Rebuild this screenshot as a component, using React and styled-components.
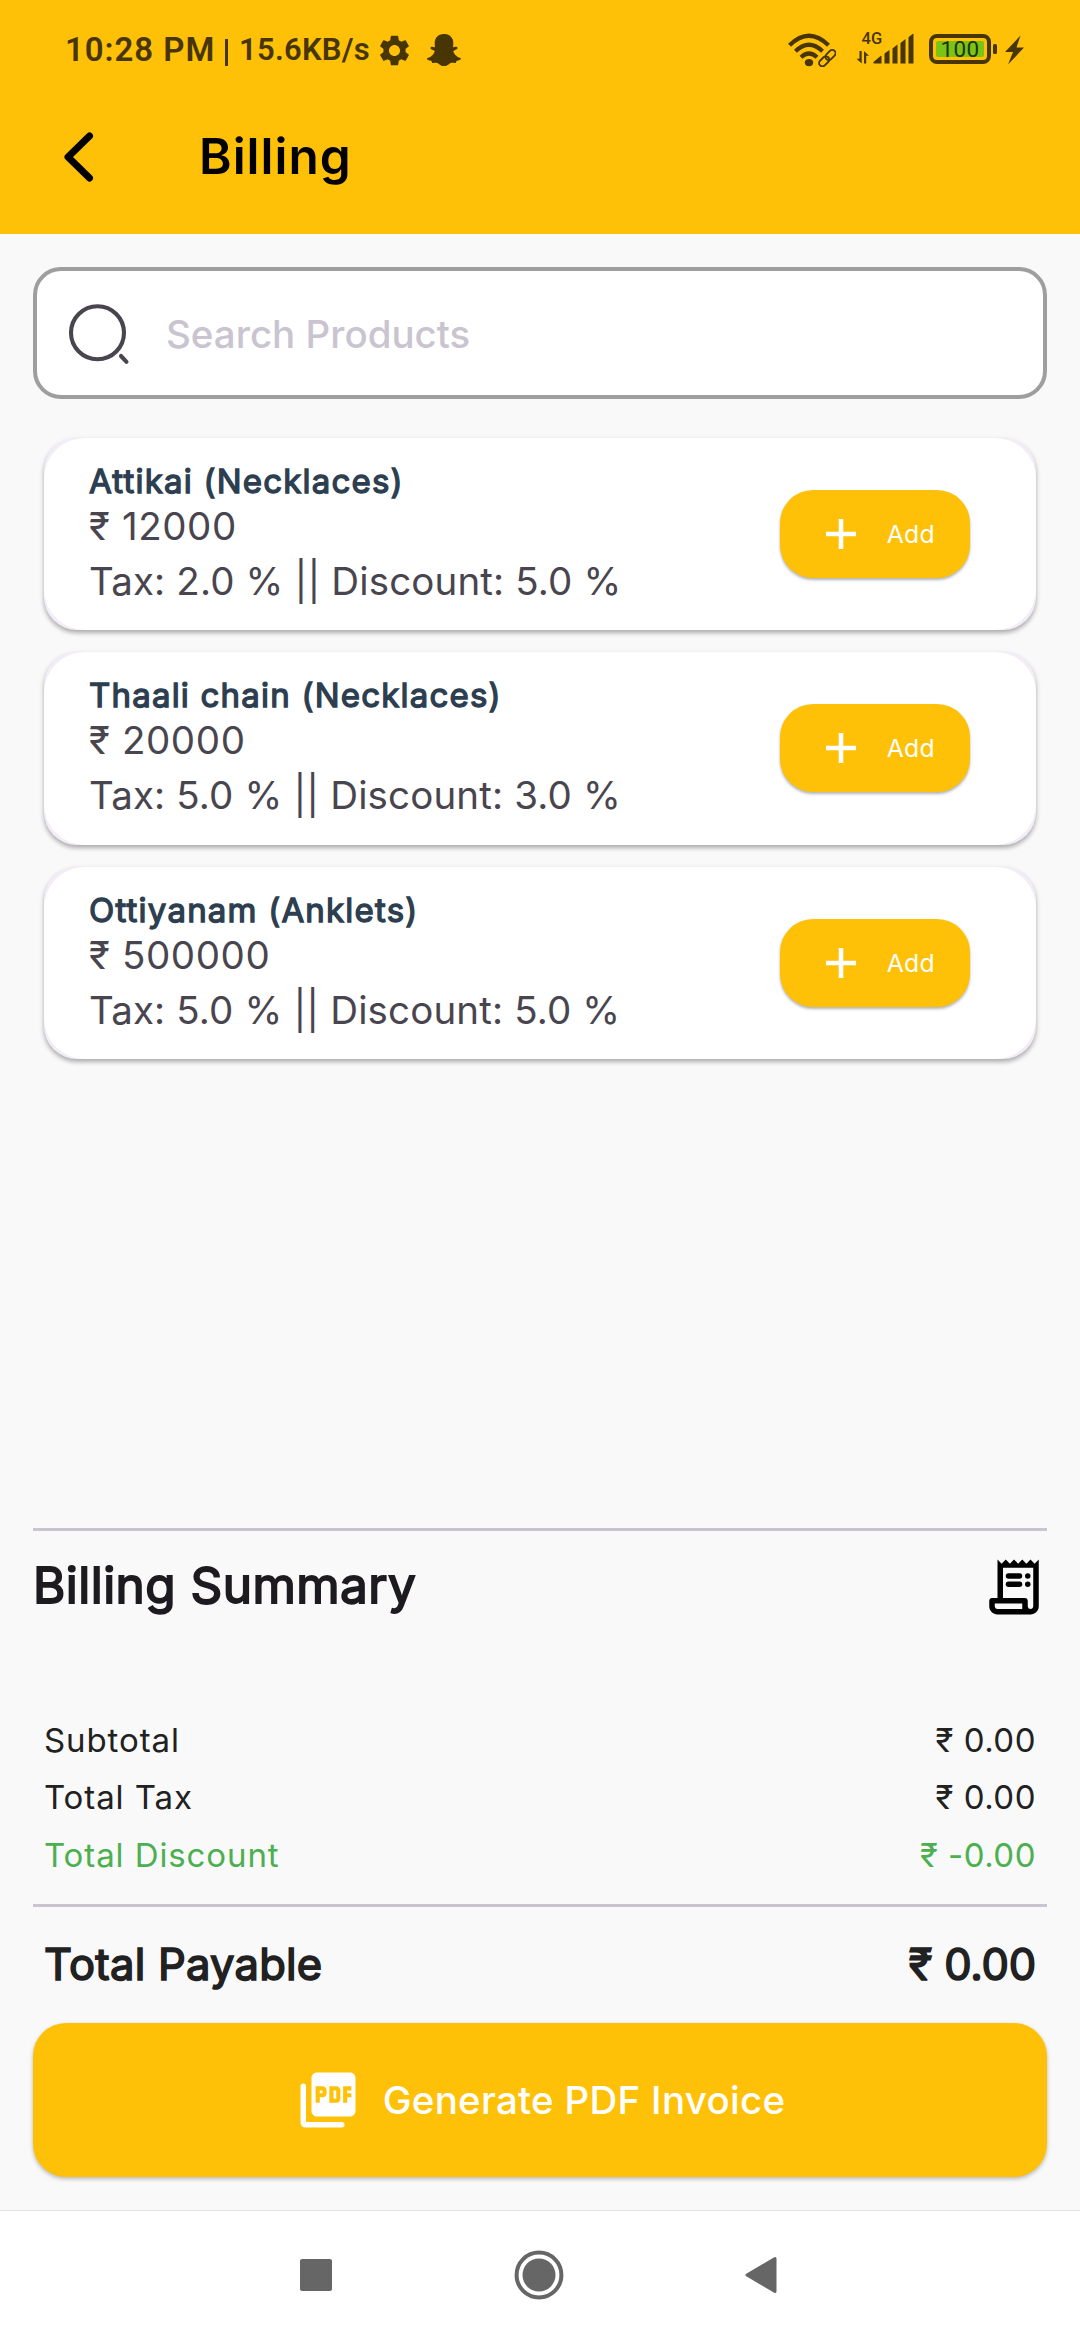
import React from "react";
import styled, { createGlobalStyle } from "styled-components";
import { MdPictureAsPdf, MdSettings } from "react-icons/md";
import { FaSnapchatGhost } from "react-icons/fa";

const AMBER = "#ffc107";
const STATUS_INK = "#473503";

const GlobalStyle = createGlobalStyle`
  * { box-sizing: border-box; }
  html, body { margin: 0; padding: 0; }
  body { background: #f9f9f9; font-family: Inter, "Liberation Sans", sans-serif; }
`;

const Screen = styled.div`
  width: 1080px;
  height: 2340px;
  display: flex;
  flex-direction: column;
  background: #f9f9f9;
  overflow: hidden;
`;

const Header = styled.header`
  height: 234px;
  background: ${AMBER};
  display: flex;
  flex-direction: column;
`;

const StatusBar = styled.div`
  height: 80px;
  padding: 21px 56px 0 65px;
  display: flex;
  justify-content: space-between;
  color: ${STATUS_INK};
  font-family: Roboto, sans-serif;
`;

const StatusGroup = styled.div`
  display: flex;
  height: 58px;
  align-items: center;
`;

const Clock = styled.span`
  width: 150px;
  font-size: 33px;
  font-weight: 600;
  line-height: 58px;
  letter-spacing: 0.95px;
  white-space: pre;
`;

const NetSpeed = styled(Clock)`
  width: 131px;
  font-size: 31px;
  letter-spacing: 0.25px;
`;

const StatusDivider = styled.i`
  width: 3px;
  height: 27px;
  margin: 4px 11px 0 10px;
  background: ${STATUS_INK};
`;

const StatusIcon = styled.span`
  display: flex;
  margin-left: ${(p) => p.$gap}px;
  margin-top: ${(p) => p.$drop || 0}px;
`;

const AppBar = styled.div`
  height: 154px;
  display: flex;
  align-items: center;
  padding-left: 62px;
`;

const BackButton = styled.button`
  display: flex;
  padding: 0;
  border: 0;
  background: none;
  margin-right: 103px;
`;

const PageTitle = styled.h1`
  margin: 0 0 2px;
  font-size: 49.5px;
  font-weight: 600;
  line-height: 60px;
  letter-spacing: 1px;
  color: #000;
`;

const Content = styled.main`
  flex: 1;
  padding: 33px;
  display: flex;
  flex-direction: column;
`;

const SearchBox = styled.label`
  height: 132px;
  border: 4px solid #9e9e9e;
  border-radius: 28px;
  background: #fff;
  display: flex;
  align-items: center;
  padding-left: 30px;
  margin-bottom: 38.6px;
`;

const SearchInput = styled.input`
  flex: 1;
  min-width: 0;
  margin-left: 33px;
  padding: 2px 0 0;
  border: 0;
  outline: 0;
  background: transparent;
  font: 500 38.5px Inter, sans-serif;
  letter-spacing: 0;
  &::placeholder { color: #cac4d0; opacity: 1; }
`;

const ProductList = styled.section`
  display: flex;
  flex-direction: column;
  gap: 22px;
  padding: 0 11px;
  flex: 1;
`;

const CardShell = styled.article`
  height: 192.5px;
  border-radius: 33px;
  background: #f3edf7;
  box-shadow: 0 3px 4px rgba(0, 0, 0, 0.24), 0 2px 6px rgba(0, 0, 0, 0.1);
`;

const CardBody = styled.div`
  height: 100%;
  border-radius: 41px;
  background: #fff;
  display: flex;
  align-items: center;
  justify-content: space-between;
  padding: 0 66px 0 45px;
`;

const ProductText = styled.div`
  display: flex;
  flex-direction: column;
  padding-top: 4.5px;
  color: #49454f;
`;

const ProductName = styled.h2`
  margin: 0;
  font-size: 33px;
  line-height: 41px;
  font-weight: 400;
  -webkit-text-stroke: 1.3px #2c3e50;
  letter-spacing: 1.2px;
  color: #2c3e50;
`;

const ProductLine = styled.p`
  margin: 0;
  font-size: 38.5px;
  font-weight: 400;
  line-height: ${(p) => p.$height}px;
  letter-spacing: ${(p) => p.$spacing}px;
`;

const AddButton = styled.button`
  width: 190px;
  height: 88px;
  border: 0;
  border-radius: 33px;
  padding: 0 35px 0 46px;
  background: ${AMBER};
  box-shadow: 0 2px 3px rgba(0, 0, 0, 0.3);
  display: flex;
  align-items: center;
  justify-content: space-between;
  color: #fff;
  font: 400 24.75px/32px Inter, sans-serif;
  letter-spacing: 0.3px;
`;

const Rule = styled.hr`
  width: 100%;
  margin: ${(p) => p.$top || 0}px 0 0;
  border: 0;
  height: 3px;
  background: #cac4d0;
`;

const Summary = styled.section`
  display: flex;
  flex-direction: column;
`;

const SummaryHeader = styled.div`
  height: 180px;
  padding-top: 23px;
  display: flex;
  align-items: flex-start;
  justify-content: space-between;
`;

const SummaryTitle = styled.h2`
  margin: 1px 0 0;
  font-size: 49.5px;
  line-height: 60px;
  font-weight: 400;
  letter-spacing: 0.45px;
  color: #1d1b20;
  -webkit-text-stroke: 1.8px #1d1b20;
`;

const AmountRow = styled.div`
  height: 57.7px;
  padding: 0 11px;
  display: flex;
  align-items: center;
  justify-content: space-between;
  color: ${(p) => p.$color || "#212121"};
  font-size: 33px;
  letter-spacing: 0.9px;
`;

const Amount = styled.span`
  letter-spacing: 0.5px;
`;

const TotalRow = styled(AmountRow)`
  height: 116px;
  padding-bottom: 2px;
  font-size: 43.5px;
  letter-spacing: 0.25px;
  -webkit-text-stroke: 1.6px #212121;
`;

const TotalAmount = styled.span`
  letter-spacing: -0.2px;
`;

const InvoiceButton = styled.button`
  height: 154px;
  flex: none;
  border: 0;
  border-radius: 33px;
  background: ${AMBER};
  box-shadow: 0 2px 4px rgba(0, 0, 0, 0.26);
  display: flex;
  align-items: center;
  justify-content: center;
  gap: 22px;
  color: #fff;
  font: 500 38.5px Inter, sans-serif;
  letter-spacing: 0.28px;
`;

const NavBar = styled.nav`
  height: 130px;
  border-top: 1px solid #e2e2e2;
  background: #fff;
  display: flex;
  align-items: center;
  justify-content: space-between;
  padding: 0 303px 1px 300px;
`;

const WifiIcon = () => (
  <svg width="48" height="34" viewBox="0 0 48 34" fill="none" stroke={STATUS_INK}>
    <path d="M1.5 12.2Q21 -6.8 40.5 12.2M7.5 18.2Q21 5.2 34.5 18.2M13 24.3Q21 16.7 29 24.3" strokeWidth="4.2" />
    <ellipse cx="21" cy="29.6" rx="4.2" ry="3.6" fill={STATUS_INK} stroke="none" />
    <g strokeWidth="1.9" transform="rotate(-45 39.5 25)">
      <rect x="28" y="21.5" width="12.5" height="7" rx="3.5" stroke={AMBER} strokeWidth="4" />
      <rect x="29" y="21.7" width="11.5" height="6.6" rx="3.3" />
      <rect x="38" y="21.7" width="11.5" height="6.6" rx="3.3" />
    </g>
  </svg>
);

const SignalIcon = () => (
  <svg width="59" height="46" viewBox="0 -6 59 46" fill={STATUS_INK}>
    <text x="5.5" y="12.3" fontFamily="Roboto, sans-serif" fontSize="16.5" fontWeight="500">4G</text>
    <path d="M3.5 19h2.2v12.5L.5 26.8h3zM8 31.5V19l5 4.7h-2.8v7.8z" />
    <path d="M17.5 30l7-6q1-.8 1 .4V31.5h-7q-1.8 0-1-1.5zM28.5 21.5l5-3.5v13.5h-5zM36.5 16.5l5-4v19h-5zM44.5 11l5-4v24.5h-5zM52.5 5.3l4-3.3q1-.7 1 .5v29h-5z" />
  </svg>
);

const BatteryIcon = () => (
  <svg width="68" height="32" viewBox="0 0 68 32">
    <rect x="2" y="3" width="58" height="26" rx="6" fill="none" stroke={STATUS_INK} strokeWidth="4" />
    <rect x="64" y="11" width="4" height="10" rx="1.5" fill={STATUS_INK} />
    <rect x="7" y="8" width="48" height="16" rx="2" fill="#7ac514" />
    <text x="31" y="24.2" textAnchor="middle" fontFamily="Roboto, sans-serif" fontSize="22.5" letterSpacing="0.3" fill="#24300a">100</text>
  </svg>
);

const BoltIcon = () => (
  <svg width="19" height="30" viewBox="0 0 19 30" fill={STATUS_INK}>
    <path d="M15.500 0.500L0 17h8L3 29.500L19 12.500h-7.500z" />
  </svg>
);

const ChevronIcon = () => (
  <svg width="34" height="54" viewBox="0 0 34 54" fill="none" stroke="#000" strokeWidth="7" strokeLinecap="round" strokeLinejoin="round">
    <path d="M27.500 6L6 27L27.500 48" />
  </svg>
);

const SearchIcon = () => (
  <svg width="66" height="66" viewBox="0 0 66 66" fill="none" stroke="#49454f" strokeWidth="4.1" strokeLinecap="round">
    <circle cx="30.5" cy="32.7" r="26.5" />
    <path d="M54 56l5.500 5.800" />
  </svg>
);

const PlusIcon = () => (
  <svg width="30" height="30" viewBox="0 0 30 30" fill="none" stroke="#fff" strokeWidth="4.6">
    <path d="M15 0v30M0 15h30" />
  </svg>
);

const ReceiptIcon = () => (
  <svg width="66" height="66" viewBox="0 0 24 24" fill="#000">
    <path d="M19.500 3.500L18 2l-1.500 1.500L15 2l-1.500 1.500L12 2l-1.500 1.500L9 2 7.500 3.500 6 2v14H4c-.55 0-1 .45-1 1v2c0 1.660 1.340 3 3 3h12c1.660 0 3-1.340 3-3V2zM15 20H6c-.55 0-1-.45-1-1v-1h10zm4-1c0 .55-.45 1-1 1s-1-.45-1-1v-2c0-.55-.45-1-1-1H8V5h11z" />
    <rect x="9" y="7" width="6" height="2" rx="1" />
    <rect x="9" y="10" width="6" height="2" rx="1" />
    <circle cx="17" cy="8" r="1" />
    <circle cx="17" cy="11" r="1" />
  </svg>
);

const PdfIcon = () => (
  <svg width="66" height="66" viewBox="0 0 24 24" fill="#fff">
    <clipPath id="pdf-front">
      <rect x="5" y="1" width="18" height="17.5" />
    </clipPath>
    <path d="M3 7v13q0 1 1 1h13" fill="none" stroke="#fff" strokeWidth="2" strokeLinecap="round" />
    <g clipPath="url(#pdf-front)">
      <MdPictureAsPdf size={24} />
    </g>
  </svg>
);

const RecentsIcon = () => (
  <svg width="32" height="32" fill="#666"><rect width="32" height="32" rx="2" /></svg>
);

const HomeIcon = () => (
  <svg width="50" height="50" viewBox="0 0 50 50">
    <circle cx="25" cy="25" r="22.4" fill="none" stroke="#666" strokeWidth="4" />
    <circle cx="25" cy="25" r="16.5" fill="#666" />
  </svg>
);

const NavBackIcon = () => (
  <svg width="32" height="38" viewBox="0 0 32 38" fill="#666" stroke="#666" strokeWidth="3" strokeLinejoin="round">
    <path d="M2 19L30 2.500V35.500z" />
  </svg>
);

const products = [
  { name: "Attikai (Necklaces)", price: "12000", tax: "2.0", discount: "5.0" },
  { name: "Thaali chain (Necklaces)", price: "20000", tax: "5.0", discount: "3.0" },
  { name: "Ottiyanam (Anklets)", price: "500000", tax: "5.0", discount: "5.0" },
];

const amounts = [
  { label: "Subtotal", value: "₹ 0.00" },
  { label: "Total Tax", value: "₹ 0.00" },
  { label: "Total Discount", value: "₹ -0.00", color: "#4caf50" },
];

const ProductCard = ({ product }) => (
  <CardShell>
    <CardBody>
      <ProductText>
        <ProductName>{product.name}</ProductName>
        <ProductLine $height={48} $spacing={0.6}>₹ {product.price}</ProductLine>
        <ProductLine $height={62} $spacing={0.14}>
          Tax: {product.tax} % || Discount: {product.discount} %
        </ProductLine>
      </ProductText>
      <AddButton>
        <PlusIcon />
        Add
      </AddButton>
    </CardBody>
  </CardShell>
);

export default function App() {
  return (
    <Screen>
      <GlobalStyle />
      <Header>
        <StatusBar>
          <StatusGroup>
            <Clock>10:28 PM</Clock>
            <StatusDivider />
            <NetSpeed>15.6KB/s</NetSpeed>
            <StatusIcon $gap={6}><MdSettings size={37} /></StatusIcon>
            <StatusIcon $gap={14}><FaSnapchatGhost size={34} /></StatusIcon>
          </StatusGroup>
          <StatusGroup>
            <StatusIcon><WifiIcon /></StatusIcon>
            <StatusIcon $gap={20} $drop={-2}><SignalIcon /></StatusIcon>
            <StatusIcon $gap={14} $drop={-2}><BatteryIcon /></StatusIcon>
            <StatusIcon $gap={8} $drop={-1}><BoltIcon /></StatusIcon>
          </StatusGroup>
        </StatusBar>
        <AppBar>
          <BackButton aria-label="Back"><ChevronIcon /></BackButton>
          <PageTitle>Billing</PageTitle>
        </AppBar>
      </Header>
      <Content>
        <SearchBox>
          <SearchIcon />
          <SearchInput placeholder="Search Products" />
        </SearchBox>
        <ProductList>
          {products.map((product) => (
            <ProductCard key={product.name} product={product} />
          ))}
        </ProductList>
        <Summary>
          <Rule />
          <SummaryHeader>
            <SummaryTitle>Billing Summary</SummaryTitle>
            <ReceiptIcon />
          </SummaryHeader>
          {amounts.map((row) => (
            <AmountRow key={row.label} $color={row.color}>
              <span>{row.label}</span>
              <Amount>{row.value}</Amount>
            </AmountRow>
          ))}
          <Rule $top={20} />
          <TotalRow>
            <span>Total Payable</span>
            <TotalAmount>₹ 0.00</TotalAmount>
          </TotalRow>
        </Summary>
        <InvoiceButton>
          <PdfIcon />
          Generate PDF Invoice
        </InvoiceButton>
      </Content>
      <NavBar>
        <RecentsIcon />
        <HomeIcon />
        <NavBackIcon />
      </NavBar>
    </Screen>
  );
}
